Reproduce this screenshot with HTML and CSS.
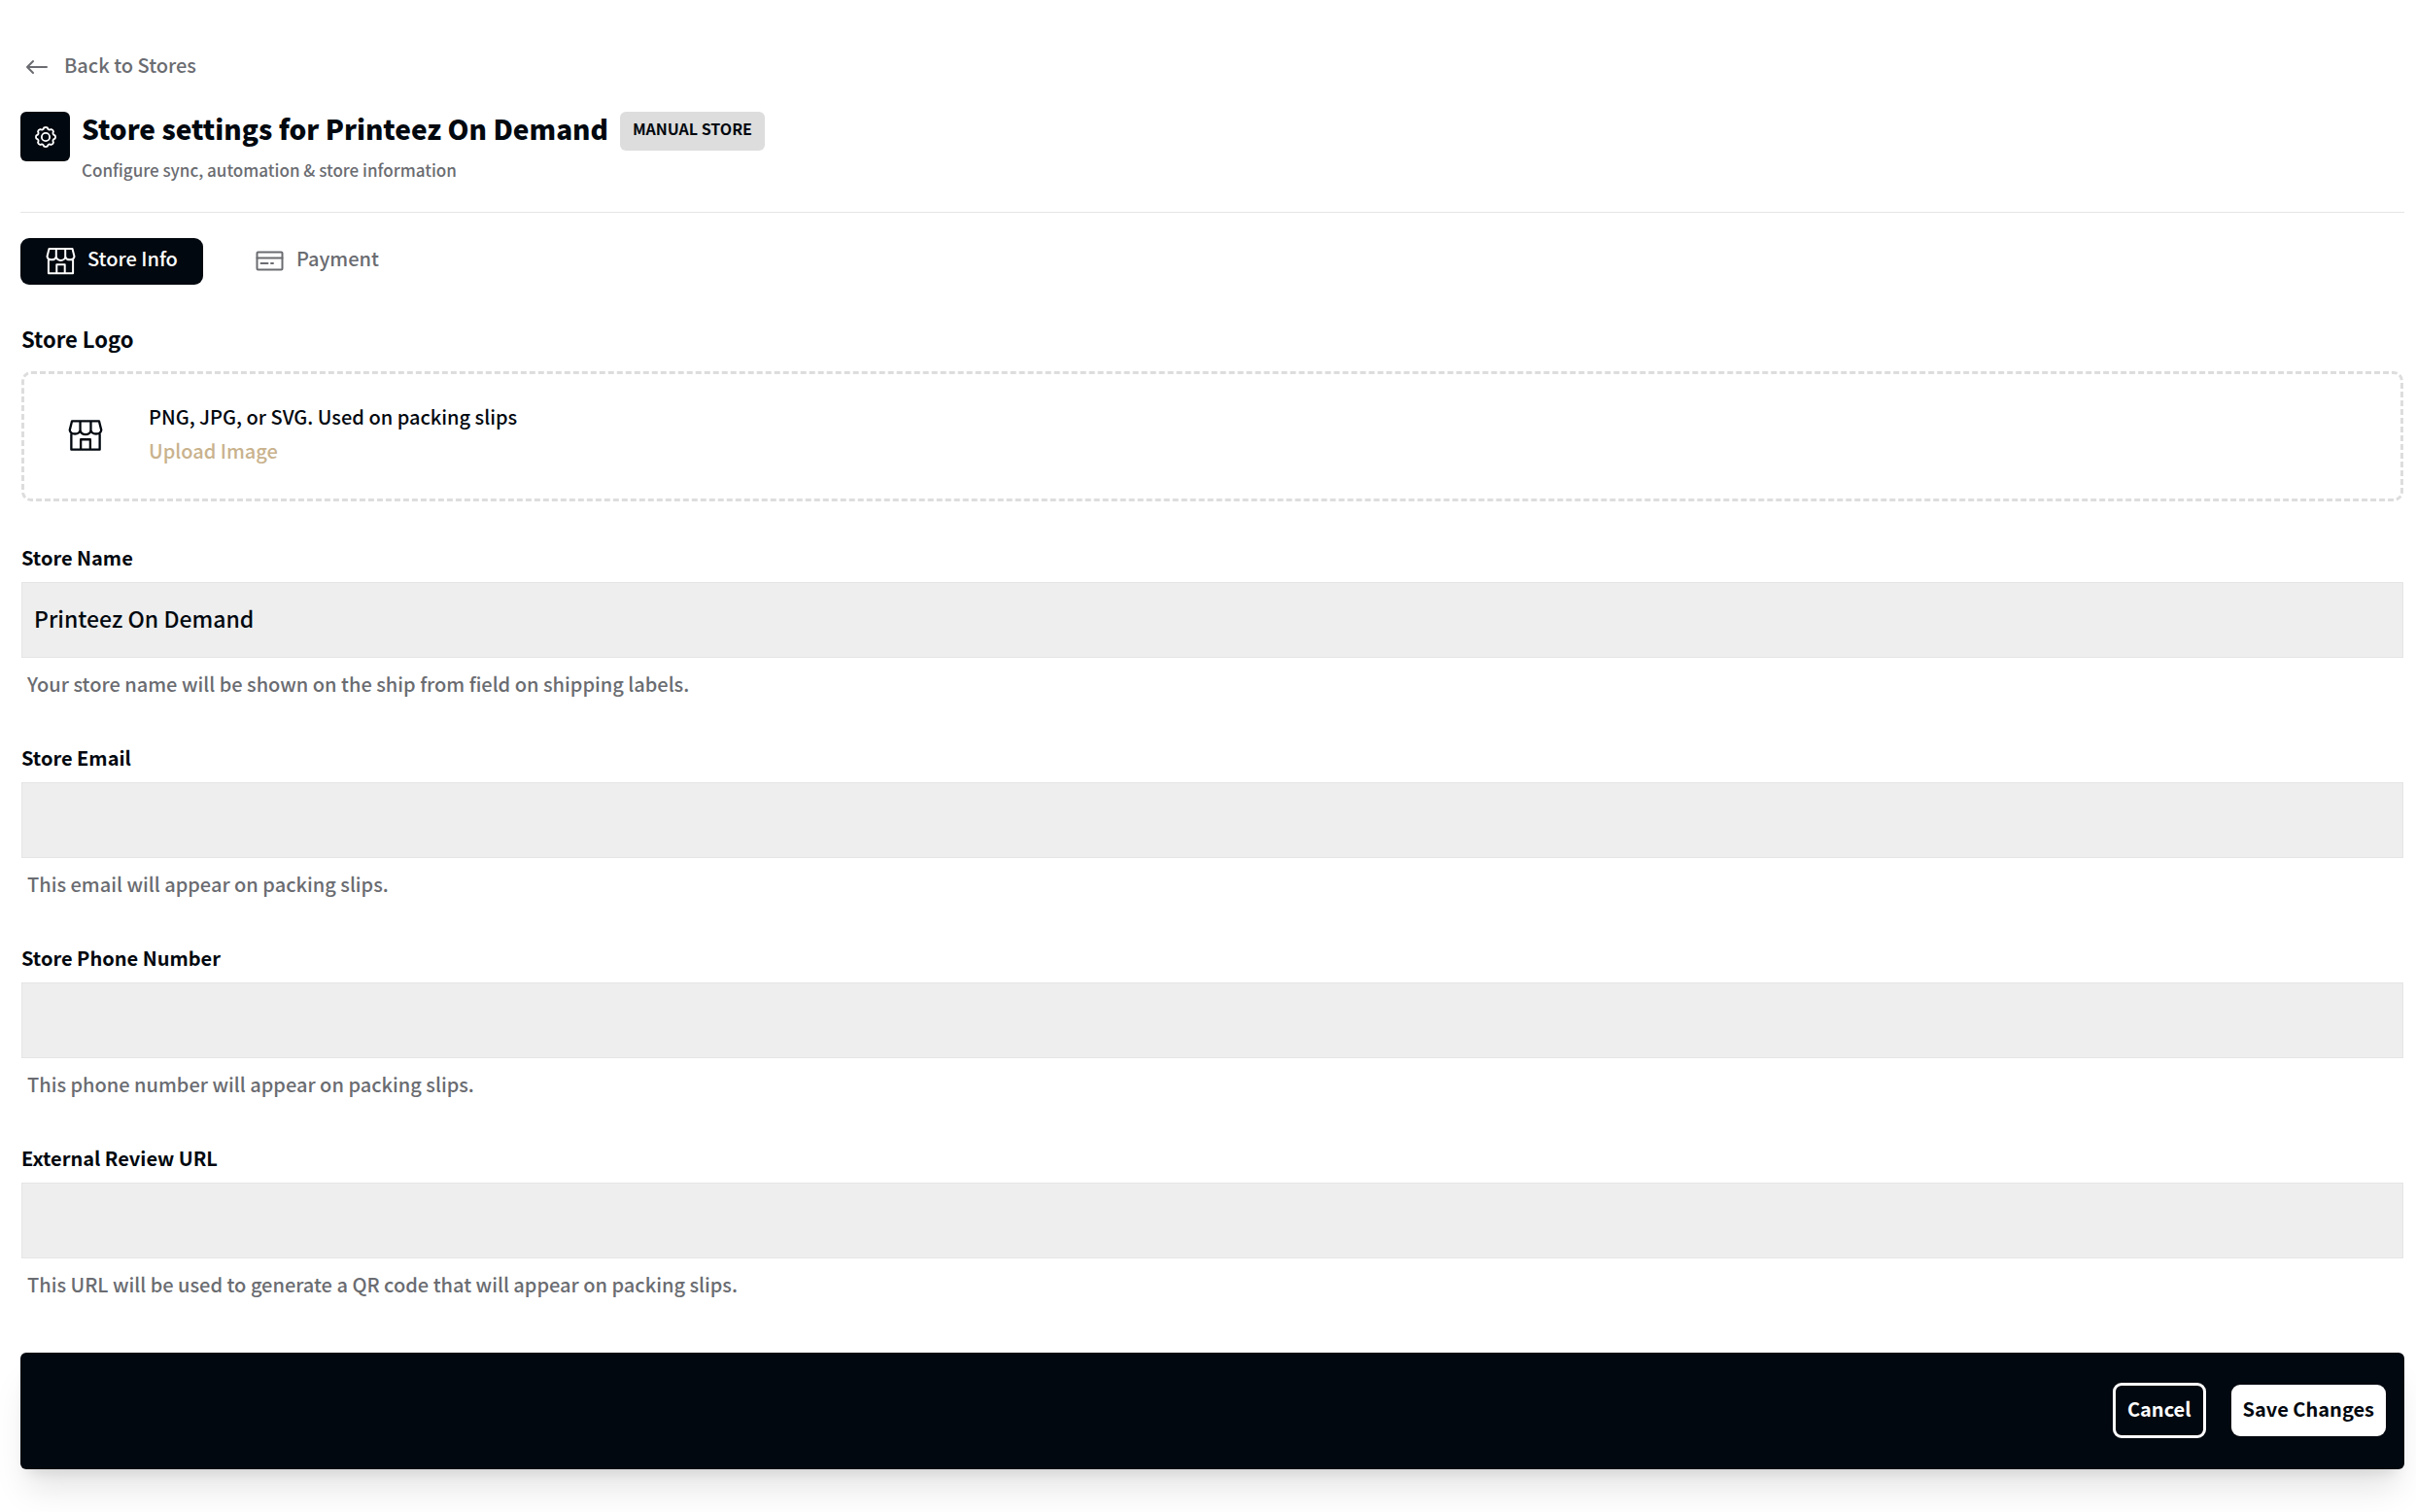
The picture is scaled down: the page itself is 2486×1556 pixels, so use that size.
FILE: index.html
```html
<!DOCTYPE html>
<html lang="en">
<head>
<meta charset="utf-8">
<meta name="viewport" content="width=device-width, initial-scale=1">
<title>Store settings</title>
<link rel="stylesheet" href="styles.css">
</head>
<body>
<svg class="sprite" aria-hidden="true">
  <symbol id="shop" viewBox="0 0 31 31">
    <path d="M3.500 2h24l2 8a4.700 3.900 0 0 1-9.300 0 4.700 3.900 0 0 1-9.400 0 4.700 3.900 0 0 1-9.300 0zM10.800 2V10M20.200 2V10M2.900 13.500V27.300H28.100V13.500M11.300 27.300V18.300h8.400v9"/>
  </symbol>
</svg>
<main class="page">
  <a class="back" href="#">
    <svg class="back-icon" viewBox="0 0 24 24" aria-hidden="true"><path d="M22 12H2M8 6l-6 6 6 6"/></svg>
    <span>Back to Stores</span>
  </a>

  <header class="header">
    <span class="header-icon">
      <svg viewBox="0 0 24 24" aria-hidden="true"><circle cx="12" cy="12" r="4.500"/><path d="M13.900 1.500Q14.900 5 18.300 3.300Q20.200 3.800 20.700 5.700Q19 9.100 22.500 10.100Q23.300 12 22.500 13.900Q19 14.900 20.700 18.300Q20.200 20.200 18.300 20.700Q14.900 19 13.900 22.500Q12 23.300 10.100 22.500Q9.100 19 5.700 20.700Q3.800 20.200 3.300 18.300Q5 14.900 1.500 13.900Q.7 12 1.500 10.100Q5 9.100 3.300 5.700Q3.800 3.800 5.700 3.300Q9.100 5 10.100 1.500Q12 .7 13.900 1.500z"/></svg>
    </span>
    <div>
      <div class="title-row">
        <h1 class="title">Store settings for Printeez On Demand</h1>
        <span class="badge">MANUAL STORE</span>
      </div>
      <p class="subtitle">Configure sync, automation &amp; store information</p>
    </div>
  </header>

  <nav class="tabs">
    <button class="tab tab-active" type="button">
      <svg class="tab-icon" aria-hidden="true"><use href="#shop"/></svg>
      <span>Store Info</span>
    </button>
    <button class="tab" type="button">
      <svg class="tab-icon" viewBox="0 0 31 31" aria-hidden="true"><rect x="2.500" y="5.500" width="26" height="18" rx="1"/><path d="M2.500 11.500h26M6.500 17h7M17 17h2"/></svg>
      <span>Payment</span>
    </button>
  </nav>

  <form class="form">
    <h2 class="section-title">Store Logo</h2>
    <div class="upload">
      <svg class="upload-icon" aria-hidden="true"><use href="#shop"/></svg>
      <div class="upload-text">
        <p>PNG, JPG, or SVG. Used on packing slips</p>
        <button class="upload-button" type="button">Upload Image</button>
      </div>
    </div>

    <div class="fields">
      <div class="field">
        <label for="store-name">Store Name</label>
        <input id="store-name" type="text" value="Printeez On Demand">
        <p class="hint">Your store name will be shown on the ship from field on shipping labels.</p>
      </div>
      <div class="field">
        <label for="store-email">Store Email</label>
        <input id="store-email" type="email">
        <p class="hint">This email will appear on packing slips.</p>
      </div>
      <div class="field">
        <label for="store-phone">Store Phone Number</label>
        <input id="store-phone" type="tel">
        <p class="hint">This phone number will appear on packing slips.</p>
      </div>
      <div class="field">
        <label for="review-url">External Review URL</label>
        <input id="review-url" type="url">
        <p class="hint">This URL will be used to generate a QR code that will appear on packing slips.</p>
      </div>
    </div>
  </form>

  <footer class="actions">
    <button class="btn btn-outline" type="button">Cancel</button>
    <button class="btn btn-solid" type="button">Save Changes</button>
  </footer>
</main>
</body>
</html>
```
FILE: styles.css
```css
* { box-sizing: border-box; }

body {
  margin: 0;
  background: #fff;
  color: #02080f;
  font: 500 20px/28px "Noto Sans CJK SC", "Noto Sans", sans-serif;
}

h1, h2, p { margin: 0; }
button, input { font: inherit; color: inherit; }
button { border: 0; background: none; cursor: pointer; }
svg { flex: none; fill: none; stroke: currentColor; stroke-width: 2; stroke-linecap: round; stroke-linejoin: round; }
.sprite { display: none; }

.page { padding: 52px 12px 44px 21px; }

.back {
  display: inline-flex;
  align-items: center;
  gap: 16px;
  padding-left: 5px;
  color: #6a6c71;
  text-decoration: none;
  vertical-align: top;
}
.back span { padding: 1px 0 5px; }
.back-icon { width: 24px; height: 24px; }

.header {
  display: flex;
  align-items: flex-start;
  gap: 12px;
  margin-top: 29px;
  padding-bottom: 31px;
  border-bottom: 1px solid #e5e5e6;
}
.header-icon {
  display: flex;
  flex: none;
  align-items: center;
  justify-content: center;
  width: 51px;
  height: 51px;
  border-radius: 6px;
  background: #02080f;
  color: #fff;
}
.header-icon svg { width: 22px; height: 22px; }
.title-row { display: flex; align-items: flex-start; gap: 12px; }
.title { font-size: 28px; line-height: 34px; font-weight: 900; }
.badge {
  height: 40px;
  padding: 0 13px;
  border-radius: 6px;
  background: #ddd;
  font-size: 16px;
  font-weight: 700;
  line-height: 34px;
}
.subtitle { margin-top: 8px; color: #6a6c71; font-size: 17px; line-height: 24px; }

.tabs { display: flex; gap: 27px; margin-top: 26px; }
.tab {
  display: flex;
  align-items: center;
  gap: 12px;
  height: 48px;
  padding: 0 26px;
  border-radius: 9px;
  color: #6a6c71;
}
.tab span { padding-bottom: 6px; }
.tab-active { background: #02080f; color: #fff; }
.tab-icon { width: 31px; height: 31px; }

.form { padding: 0 1px; }
.section-title { margin-top: 40px; font-size: 22px; line-height: 30px; font-weight: 700; }
.upload {
  display: flex;
  align-items: center;
  gap: 47px;
  margin-top: 19px;
  padding: 26px 45px;
  border: 3px dashed #ddd;
  border-radius: 10px;
}
.upload-icon { width: 36px; height: 36px; }
.upload-text { padding-bottom: 6px; line-height: 35px; }
.upload-button { display: block; padding: 0; color: #c9b28d; }

.fields { display: flex; flex-direction: column; gap: 48px; margin-top: 44px; }
.field { display: flex; flex-direction: column; }
.field label { margin-bottom: 11px; font-weight: 700; }
.field input {
  width: 100%;
  height: 78px;
  padding: 0 12px 4px;
  border: 1px solid #e5e5e6;
  border-radius: 0;
  background: #eee;
  font-size: 23px;
}
.hint { margin-top: 13px; padding-left: 6px; color: #6a6c71; }

.actions {
  display: flex;
  align-items: center;
  justify-content: flex-end;
  gap: 26px;
  height: 120px;
  margin-top: 56px;
  padding: 0 19px 1px;
  border-radius: 6px;
  background: #02080f;
  box-shadow: 0 27px 33px -7px rgb(0 0 0 / 10%), 0 11px 13px -8px rgb(0 0 0 / 10%);
}
.btn { padding: 0 12px 4px; border-radius: 9px; font-weight: 700; }
.btn-outline { height: 57px; border: 3px solid #fff; color: #fff; }
.btn-solid { height: 53px; background: #fff; }
```
